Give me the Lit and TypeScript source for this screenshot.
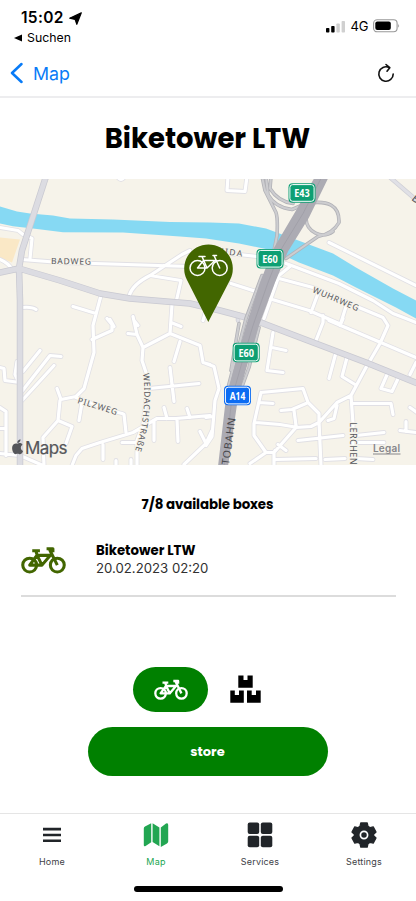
import { LitElement, html, css, svg } from "lit";
import { customElement, property } from "lit/decorators.js";

const MINOR_ROADS = [
  "M0 227L18 230L23 234L32 238L30 258", "M22 259L60 262L95 263L190 266", "M0 259Q8 262 13 270",
  "M22 307Q32 306 36 309", "M101 295L93 325L94 352L84 388L76 396L61 399L57 388",
  "M73 306L96 313", "M110 319L114 326", "M134 320L138 325", "M92 339L112 330L112 324L107 318",
  "M129 296Q132 284 150 275L182 254L190 250", "M150 275L181 280L176 302", "M172 304L170 333",
  "M171 322L181 326", "M133 316L137 334L143 347L170 333L200 345L203 362L210 364", "M128 333L137 334",
  "M180 341L174 361", "M143 347L142 360L147 375L146 400L143 424L137 440L137 465",
  "M149 388L199 383", "M170 367L174 401", "M210 415L176 418L157 418L133 432L100 442L82 448L76 455L72 465",
  "M164 407L167 418", "M187 408L190 417", "M154 421V440", "M177 419L178 441", "M200 431L206 443",
  "M212 430L206 443L184 464", "M122 442H141", "M103 444V459", "M76 397L114 411L122 413L124 414L126 432",
  "M82 402L79 420", "M60 400L58 420L43 437L44 465", "M58 420L72 426L66 443", "M203 320L206 310",
  "M23 371L40 350", "M21 392L50 355L61 356", "M22 400L54 365", "M0 367L4 368L5 380L20 382", "M17 361L15 374L18 380",
  "M0 407L6 411V455", "M0 428H5", "M0 453L20 455L43 465", "M116 460V466", "M131 459V466",
  "M228 176L227 190L245 191L247 176", "M118 177Q121 181 124 177", "M230 253L257 256",
  "M286 263L339 283L373 300L393 313L406 318L416 322", "M279 278L313 287L359 307L383 317L388 325L380 343L366 367L351 395L353 423V465",
  "M290 266L279 275L264 318", "M269 298L309 310L339 323", "M231 283L259 292", "M318 293L311 312",
  "M346 306L341 322", "M329 242L416 285", "M323 315V322L316 340", "M329 320L416 357", "M343 318L340 325",
  "M351 395L337 402L319 422L311 426L296 427L274 452V465", "M261 392L303 388L308 402L319 413V421",
  "M261 392L254 423V435L266 452H274L275 450", "M256 422L280 424L298 427", "M259 402L273 403", "M281 410L292 409L306 403",
  "M294 410L296 425", "M319 421L321 465", "M298 440L343 435", "M356 435L384 432", "M357 442H384", "M266 452L250 463",
  "M276 459L316 458", "M325 459L345 458", "M356 458L373 459", "M353 403H391L393 414", "M337 405L334 418L328 420",
  "M273 332L267 370L283 372", "M272 347L286 350", "M336 352L329 378", "M347 357L342 376L355 384",
  "M388 372L381 388L392 391L399 376", "M410 374L416 362", "M400 430L416 432", "M406 421V431", "M410 407L417 412",
  "M206 363L214 366L219 388L215 400L212 436L206 445", "M206 417L213 416", "M286 450L278 444",
].join("");

const MAIN_ROADS =
  "M46 176L22 250L19 268L20 300V466M0 272L19 268L60 280L100 293L130 298L190 303L220 310L250 318L300 337L366 362L418 383";
const SIDE_ROADS = "M389 176L418 201M238 320V314";
const RAMPS =
  "M262 176L265 190L276 212Q278 218 277 235L274 250M271 176L270 188Q278 201 293 203M266 176L268 194Q275 207 292 209L306 203Q340 197 339 222Q333 233 318 236L286 258M306 206V218A17 17 0 0 0 333 231M262 275L246 318L226 395M259 327L249 367L237 400M239 323L231 370";
const RIVER =
  "M0 206L17 211L30 213L53 215L70 218L113 219L170 221.500L210 222L239 223L266 228L293 238L333 253L356 267L393 288L416 300V318L396 307L356 287L333 275L299 262L273 250L239 243L206 238L180 236L123 232L63 231.700L33 228L13 225.700L0 223Z";

const shield = (x: number, y: number, label: string, color: string) => svg`
  <rect x=${x} y=${y} width="27" height="19.500" rx="4" fill=${color} />
  <rect x=${x + 1.4} y=${y + 1.4} width="24.200" height="16.700" rx="2.800" fill="none" stroke="#fff" stroke-width="1" />
  <text class="shield" x=${x + 13.5} y=${y + 13.9} textLength="15.500" lengthAdjust="spacingAndGlyphs">${label}</text>`;

@customElement("bike-icon")
export class BikeIcon extends LitElement {
  static styles = css`
    :host { display: block; }
    svg { display: block; width: 100%; height: 100%; fill: none; stroke: currentColor; stroke-linejoin: round; }
  `;
  render() {
    return html`<svg viewBox="0 0 44 27" stroke-width="3">
      <circle cx="8.500" cy="18.500" r="6.800" />
      <circle cx="35.500" cy="18.500" r="6.800" />
      <path d="M11 4.500H18.500M14.500 4.500L16 9.500L20.500 18.500H8.500L15.500 9H28.500L20.500 18.500M25 2.500H31.200V6M28 3.500L35.500 18.500" />
    </svg>`;
  }
}

@customElement("area-map")
export class AreaMap extends LitElement {
  static styles = css`
    :host { display: block; }
    svg { display: block; width: 100%; height: 100%; }
    .line { fill: none; stroke-linecap: round; stroke-linejoin: round; }
    text { font-family: "Noto Sans", sans-serif; }
    .street { font-size: 8.500px; fill: #55565c; paint-order: stroke; stroke: #f6f3ea; stroke-width: 2px; stroke-linejoin: round; }
    .onroad { stroke: none; font-size: 10.500px; fill: #48494e; }
    .shield { font-size: 11px; font-weight: 700; fill: #fff; text-anchor: middle; }
    .brand { font: 400 17px Inter, sans-serif; fill: #55565a; stroke: #55565a; stroke-width: .2px; }
    .legal { font: 600 10px Inter, sans-serif; fill: #86868a; }
  `;
  render() {
    return html`<svg viewBox="0 178.500 416 286" preserveAspectRatio="none">
      <rect y="178" width="416" height="288" fill="#f6f3ea" />
      <path d="M0 237L20 239L12 262L0 257Z" fill="#fae8c6" />
      <path d=${RIVER} fill="#86d9f3" />
      <path class="line" d=${MINOR_ROADS} stroke="#e1e0e5" stroke-width="4.800" />
      <path class="line" d=${MINOR_ROADS} stroke="#fff" stroke-width="3.200" />
      <path class="line" d=${SIDE_ROADS} stroke="#cfcfd6" stroke-width="4.500" />
      <path class="line" d=${SIDE_ROADS} stroke="#e0e0e6" stroke-width="3" />
      <path class="line" d=${MAIN_ROADS} stroke="#c9c9d1" stroke-width="6.500" />
      <path class="line" d=${MAIN_ROADS} stroke="#dcdce2" stroke-width="5" />
      <path class="line" d=${RAMPS} stroke="#b2b2b7" stroke-width="3.600" />
      <path class="line" d=${RAMPS} stroke="#cdcdd0" stroke-width="2" />
      <path d="M314 178H328L309 217L288 251L275 282L259 325L250 355L238 397L228 466H218L226 397L238 353L246 325L260 282L273 249L296 210Z" fill="#acabb3" />
      <path class="line" d="M321 178L303 213L281 249L268 282L253 325L244 355L232 397L224 466" stroke="#9e9da6" stroke-width=".8" />
      <text class="street" x="51" y="263.500" textLength="40" transform="rotate(1 51 263)">BADWEG</text>
      <text class="street" x="217" y="253" textLength="25" transform="rotate(7 217 253)">UIDA</text>
      <text class="street" x="312" y="291.500" textLength="49" transform="rotate(23 312 291.500)">WUHRWEG</text>
      <text class="street" x="77" y="402.500" textLength="41" transform="rotate(17 77 402.500)">PILZWEG</text>
      <path id="weid" d="M143 373Q148 410 134.500 452" fill="none" />
      <text class="street"><textPath href="#weid" textLength="78">WEIDACHSTRAßE</textPath></text>
      <text class="street" x="349.500" y="422" textLength="42" transform="rotate(90 349.500 422)">LERCHEN</text>
      <text class="street onroad" x="229" y="464.500" textLength="47" transform="rotate(-82 229 464.500)">TOBAHN</text>
      <text class="street onroad" x="411" y="199" transform="rotate(40 411 199)">B</text>
      ${shield(288.5, 182.7, "E43", "#0d9f73")}
      ${shield(256.5, 248.5, "E60", "#0d9f73")}
      ${shield(232.7, 342.3, "E60", "#0d9f73")}
      ${shield(224, 385.3, "A14", "#0c6cf2")}
      <path d="M208.300 321.500L187 279.500A24.300 24.300 0 1 1 230 279.500Z" fill="#426600" />
      <g class="line" stroke="#fff" stroke-width="1.500">
        <circle cx="197.500" cy="267.500" r="7.500" /><circle cx="219.700" cy="267.500" r="7.500" />
        <path d="M199 256H205M202 256L207 267.500H197.500L203.500 260H215L207 267.500M213 255H216.500M214 255L219.700 267.500" />
      </g>
      <path d="M17.500 443.200C18.700 442.300 21.200 442.300 22.500 444.200C20 445.800 20.400 449.400 23.100 450.500C22 453.200 20.500 454.300 19 453.600C17.900 453.100 17.100 453.200 16.100 453.600C13.500 454.400 11.500 449 12.300 446C13 443.300 15.200 442.500 17.500 443.200ZM17.300 442.500C17.200 440.600 18.700 439 20.500 438.800C20.700 440.900 19.200 442.400 17.300 442.500Z" fill="#55565a" />
      <text class="brand" x="25" y="453" textLength="42.500">Maps</text>
      <text class="legal" x="373" y="451.500" textLength="27">Legal</text>
      <path d="M373 453.500H400.500" stroke="#86868a" />
    </svg>`;
  }
}

@customElement("tab-item")
export class TabItem extends LitElement {
  @property() label = "";
  @property() icon = "";
  static styles = css`
    :host { display: flex; flex-direction: column; align-items: center; flex: 1; color: #212529; padding-top: 8px; gap: 8px; }
    :host([active]) { color: #22a652; }
    svg { width: 26px; height: 26px; fill: currentColor; display: block; }
    span { font: 400 9px/12px Inter, sans-serif; letter-spacing: .2px; color: #3d4045; }
    :host([active]) span { color: #22a652; }
  `;
  private glyph() {
    switch (this.icon) {
      case "menu":
        return svg`<path d="M4 5.800h18v2.600H4zM4 11.700h18v2.600H4zM4 17.500h18v2.600H4z" />`;
      case "map":
        return svg`<path d="M8.200 1.200V20.200L2.600 24Q.8 25 .8 23V6.500Q.8 5.200 2 4.500ZM9.600 1.200L16.400 5.500V24.200L9.600 20ZM25.200 3V19.500Q25.200 20.600 24 21.400L17.800 25V5.500L23 1.600Q25.200 .6 25.200 3Z" />`;
      case "grid":
        return svg`<rect x=".7" y=".6" width="11.500" height="11.500" rx="2" /><rect x="13.800" y=".6" width="11.500" height="11.500" rx="2" /><rect x=".7" y="13.800" width="11.500" height="11.500" rx="2" /><rect x="13.800" y="13.800" width="11.500" height="11.500" rx="2" />`;
      default:
        return svg`<path stroke="currentColor" stroke-width="1.300" stroke-linejoin="round" d="M9.800 1H16.200L17 4.400L19.200 5.700L22.200 4.900L25 10L22.600 12.300V13.700L25 16L22.200 21.100L19.200 20.300L17 21.600L16.200 25H9.800L9 21.600L6.800 20.300L3.800 21.100L1 16L3.400 13.700V12.300L1 10L3.800 4.900L6.800 5.700L9 4.400Z" /><circle cx="13" cy="13" r="3.600" fill="currentColor" stroke="#fff" stroke-width="1.700" />`;
    }
  }
  render() {
    return html`<svg viewBox="0 0 26 26">${this.glyph()}</svg><span>${this.label}</span>`;
  }
}

@customElement("app-root")
export class AppRoot extends LitElement {
  static styles = css`
    :host { display: flex; flex-direction: column; width: 416px; height: 901px; background: #fff; color: #000; overflow: hidden; font-family: Inter, sans-serif; }
    * { box-sizing: border-box; }
    svg { display: block; }
    .status { display: flex; justify-content: space-between; height: 50px; padding: 8px 16px 0 14px; }
    .time { display: flex; align-items: center; gap: 5px; padding-left: 7px; font: 600 15.500px/20px Inter, sans-serif; letter-spacing: .3px; }
    .back-app { display: flex; align-items: center; gap: 5px; font: 400 12.300px/20px Inter, sans-serif; }
    .signal { display: flex; align-items: center; gap: 4.500px; height: 36px; font: 400 13px/20px Inter, sans-serif; }
    .nav { display: flex; justify-content: space-between; align-items: center; height: 48px; padding: 0 21px 0 10px; border-bottom: 2px solid #ededef; }
    .back { display: flex; align-items: center; gap: 10px; color: #087bf7; font-size: 17.800px; }
    h1 { margin: 0; height: 80.500px; text-align: center; font: 700 27.500px/82px Poppins, Inter, sans-serif; padding-right: 1px; white-space: nowrap; }
    area-map { height: 286px; flex: none; }
    .count { margin-top: 31.500px; padding-right: 1px; text-align: center; font: 700 13.400px/18px Poppins, Inter, sans-serif; letter-spacing: -.1px; }
    .entry { display: flex; align-items: center; gap: 30px; height: 83px; margin: 0 20px 0 21px; padding-top: 10px; border-bottom: 2px solid #dcdcdc; }
    .entry bike-icon { width: 45px; height: 28px; color: #426600; }
    .name { font: 700 13.300px/18px Poppins, Inter, sans-serif; }
    .date { font: 400 13.200px/17px Inter, sans-serif; color: #303030; }
    .modes { display: flex; gap: 22px; margin: 70px 0 0 133px; align-items: center; }
    .modes > svg { margin-bottom: 2px; }
    .mode { display: flex; align-items: center; justify-content: center; width: 75px; height: 45px; border: 0; padding: 0; border-radius: 23px; background: #008000; color: #fff; }
    .mode bike-icon { width: 34px; height: 21px; }
    .store { align-self: center; width: 240px; height: 49px; margin-top: 15px; padding: 0 1px 0 0; border: 0; border-radius: 25px; background: #008000; color: #fff; font: 700 13px/49px Poppins, Inter, sans-serif; }
    .tabs { display: flex; margin-top: auto; height: 73px; flex: none; border-top: 1px solid #e5e5e5; }
    .indicator { align-self: center; width: 149px; height: 6px; border-radius: 3px; background: #000; margin-bottom: 9px; flex: none; }
  `;
  render() {
    return html`
      <div class="status">
        <div>
          <div class="time"><span>15:02</span><svg width="13" height="13" viewBox="0 0 13 13"><path d="M12.300.8L7.800 12.300L6.200 7.500L.7 6.200Z" stroke="#000" stroke-width="1.200" stroke-linejoin="round" /></svg></div>
          <div class="back-app"><svg width="8" height="8" viewBox="0 0 8 8"><path d="M0 4L8 .6V7.400Z" /></svg><span>Suchen</span></div>
        </div>
        <div class="signal">
          <svg width="20" height="13" viewBox="0 0 20 13"><rect x="0" y="8" width="3.400" height="4.500" rx=".8" /><rect x="5.200" y="6" width="3.400" height="6.500" rx=".8" /><rect x="10.400" y="3.500" width="3.400" height="9" rx=".8" fill="#d0d0d0" /><rect x="15.600" y="1" width="3.400" height="11.500" rx=".8" fill="#d0d0d0" /></svg>
          <span>4G</span>
          <svg width="27" height="14" viewBox="0 0 27 14"><rect x=".6" y=".8" width="23.500" height="12" rx="3.500" fill="none" stroke="#999" stroke-width="1.100" /><rect x="2.300" y="2.500" width="15.500" height="8.600" rx="2" /><path d="M25.200 4.800Q27 6.800 25.200 8.800Z" fill="#999" /></svg>
        </div>
      </div>
      <div class="nav">
        <div class="back"><svg width="13" height="22" viewBox="0 0 13 22" fill="none" stroke="currentColor" stroke-width="2.500" stroke-linecap="round" stroke-linejoin="round"><path d="M11.500 2L2 11L11.500 20" /></svg><span>Map</span></div>
        <svg width="18" height="20" viewBox="0 0 18 20" fill="none" stroke="#111" stroke-width="1.600" stroke-linecap="round" stroke-linejoin="round"><path d="M16.200 11A7.200 7.200 0 1 1 12 4.500M9 1.500L12.800 4.700L10 8.200" /></svg>
      </div>
      <h1>Biketower LTW</h1>
      <area-map></area-map>
      <div class="count">7/8 available boxes</div>
      <div class="entry">
        <bike-icon></bike-icon>
        <div><div class="name">Biketower LTW</div><div class="date">20.02.2023 02:20</div></div>
      </div>
      <div class="modes">
        <button class="mode" aria-label="Bike"><bike-icon></bike-icon></button>
        <svg width="31" height="28" viewBox="0 0 31 28"><path d="M8.300.6H13.500V5H17.500V.6H22.700V12.700H8.300ZM.3 15.600H4.800V20H9V15.600H13.800V27.700H.3ZM17 15.600H21.700V20H26V15.600H30.700V27.700H17Z" /></svg>
      </div>
      <button class="store">store</button>
      <div class="tabs">
        <tab-item icon="menu" label="Home"></tab-item>
        <tab-item icon="map" label="Map" active></tab-item>
        <tab-item icon="grid" label="Services"></tab-item>
        <tab-item icon="gear" label="Settings"></tab-item>
      </div>
      <div class="indicator"></div>
    `;
  }
}
